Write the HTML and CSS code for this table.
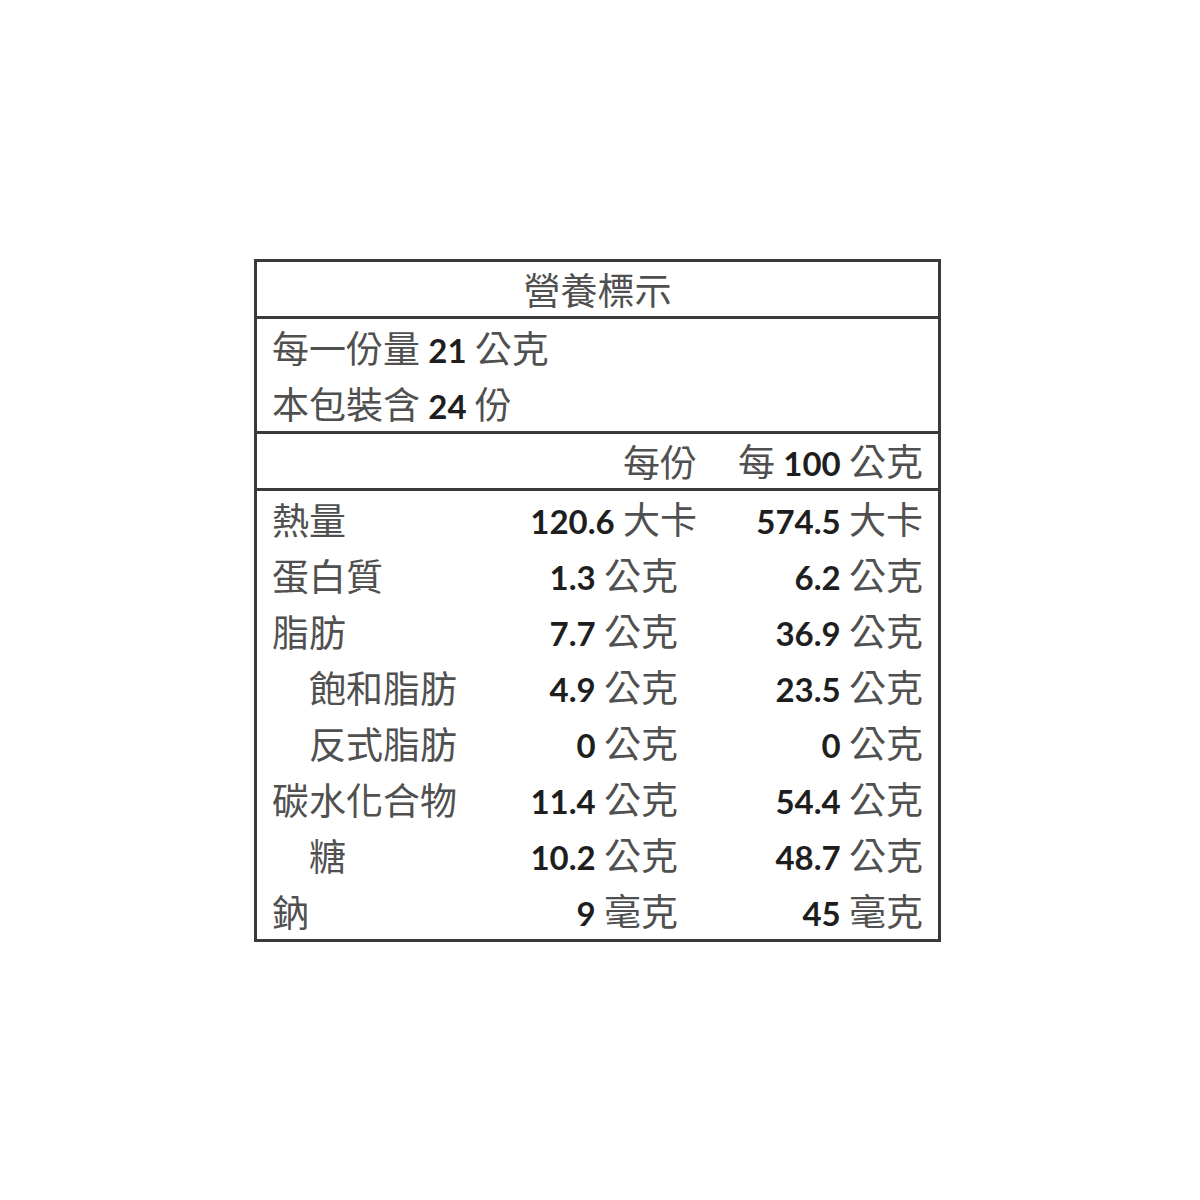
FILE: index.html
```html
<!DOCTYPE html>
<html lang="zh-Hant">
<head>
<meta charset="utf-8">
<title>營養標示</title>
<link rel="stylesheet" href="styles.css">
</head>
<body>
<div class="page">
  <div class="label">
    <div class="title">營養標示</div>
    <div class="serving">
      <div class="line">每一份量 <span class="num">21</span> 公克</div>
      <div class="line">本包裝含 <span class="num">24</span> 份</div>
    </div>
    <div class="row head">
      <div class="name"></div>
      <div class="per">每份</div>
      <div class="per100">每 <span class="num">100</span> 公克</div>
    </div>
    <div class="rows">
      <div class="row">
        <div class="name">熱量</div>
        <div class="per"><span class="num">120.6</span> 大卡</div>
        <div class="per100"><span class="num">574.5</span> 大卡</div>
      </div>
      <div class="row">
        <div class="name">蛋白質</div>
        <div class="per g"><span class="num">1.3</span> 公克</div>
        <div class="per100"><span class="num">6.2</span> 公克</div>
      </div>
      <div class="row">
        <div class="name">脂肪</div>
        <div class="per g"><span class="num">7.7</span> 公克</div>
        <div class="per100"><span class="num">36.9</span> 公克</div>
      </div>
      <div class="row">
        <div class="name sub">飽和脂肪</div>
        <div class="per g"><span class="num">4.9</span> 公克</div>
        <div class="per100"><span class="num">23.5</span> 公克</div>
      </div>
      <div class="row">
        <div class="name sub">反式脂肪</div>
        <div class="per g"><span class="num">0</span> 公克</div>
        <div class="per100"><span class="num">0</span> 公克</div>
      </div>
      <div class="row">
        <div class="name">碳水化合物</div>
        <div class="per g"><span class="num">11.4</span> 公克</div>
        <div class="per100"><span class="num">54.4</span> 公克</div>
      </div>
      <div class="row">
        <div class="name sub">糖</div>
        <div class="per g"><span class="num">10.2</span> 公克</div>
        <div class="per100"><span class="num">48.7</span> 公克</div>
      </div>
      <div class="row">
        <div class="name">鈉</div>
        <div class="per g"><span class="num">9</span> 毫克</div>
        <div class="per100"><span class="num">45</span> 毫克</div>
      </div>
    </div>
  </div>
</div>
</body>
</html>
```
FILE: styles.css
```css
html, body {
  margin: 0;
  padding: 0;
  background: #ffffff;
}

.page {
  padding: 259px 0 0 254px;
}

.label {
  width: 681px;
  border: 3px solid #3a3a3a;
  font-family: "Noto Sans CJK TC", "Noto Sans CJK SC", sans-serif;
  font-size: 37px;
  font-weight: 400;
  color: #505050;
}

.num {
  font-family: "Lato", "Open Sans", sans-serif;
  font-size: 33px;
  font-weight: 700;
  color: #1e1e1e;
}

.title {
  height: 54px;
  line-height: 54px;
  text-align: center;
  border-bottom: 3px solid #3a3a3a;
}

.serving {
  padding: 0 15px;
  border-bottom: 3px solid #3a3a3a;
}

.line {
  height: 56px;
  line-height: 56px;
  white-space: nowrap;
}

.row {
  display: flex;
  align-items: center;
  height: 56px;
  line-height: 56px;
  padding: 0 15px;
  white-space: nowrap;
}

.row.head {
  height: 54px;
  line-height: 54px;
  border-bottom: 3px solid #3a3a3a;
}

.name {
  flex: 1;
}

.name.sub {
  padding-left: 37px;
}

.per {
  width: 220px;
  text-align: right;
}

.per.g {
  padding-right: 19px;
  width: 201px;
}

.per100 {
  width: 226px;
  text-align: right;
}
```
